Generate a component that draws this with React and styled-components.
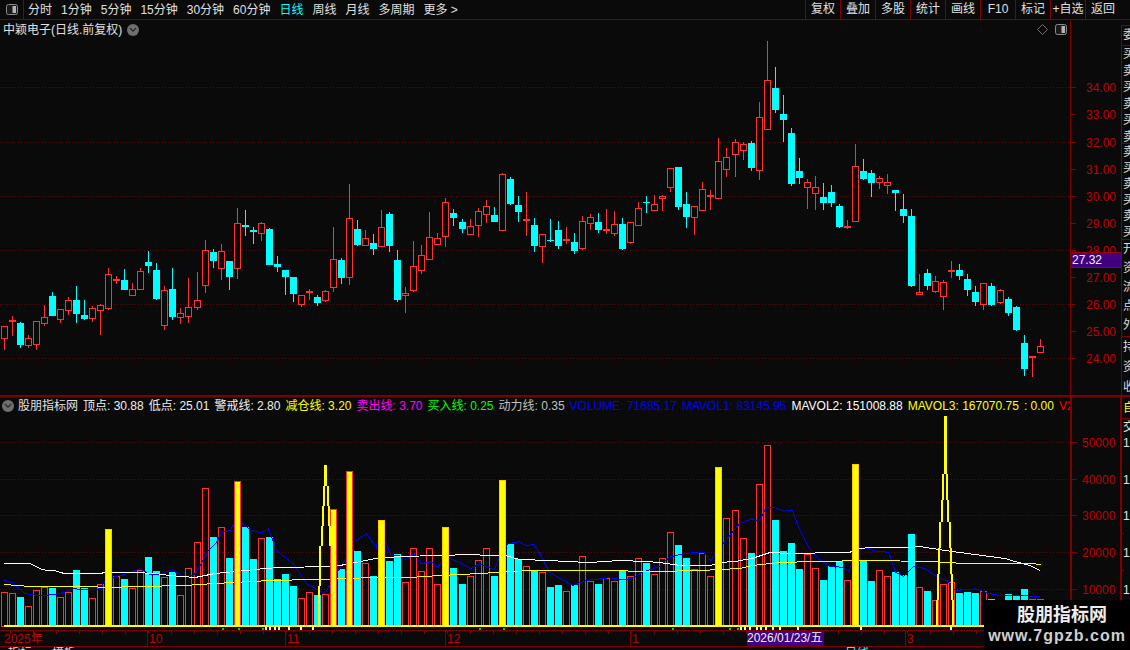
import React from 'react';
import styled, { createGlobalStyle } from 'styled-components';

const LINE = '#800000';
const GRID = '#6a0000';
const AXIS_TEXT = '#c00000';
const UP = '#ff3232';
const DOWN = '#00ffff';
const YELLOW = '#ffff00';

const GlobalStyle = createGlobalStyle`
  html, body {
    margin: 0;
    background: #0a0a0a;
  }
`;

const Page = styled.div`
  position: relative;
  width: 1130px;
  height: 650px;
  overflow: hidden;
  background: #0a0a0a;
  color: #e0e0e0;
  font: 12px/1 "Liberation Sans", "Noto Sans CJK SC", sans-serif;
`;

const Toolbar = styled.div`
  display: flex;
  align-items: center;
  height: 19px;
  border-bottom: 1px solid ${LINE};
`;

const ToggleBox = styled.div`
  display: flex;
  align-items: center;
  justify-content: center;
  box-sizing: border-box;
  width: 24px;
  height: 19px;
  border-right: 1px solid ${LINE};
`;

const Tabs = styled.div`
  display: flex;
  gap: 9px;
  margin-left: 4px;
`;

const Tab = styled.span`
  color: ${({ $active }) => ($active ? DOWN : '#e0e0e0')};
  white-space: nowrap;
`;

const Actions = styled.div`
  display: flex;
  margin-left: auto;
  margin-right: 10px;
`;

const ActionButton = styled.div`
  box-sizing: border-box;
  width: 35px;
  height: 19px;
  line-height: 19px;
  text-align: center;
  white-space: nowrap;
  border-left: 1px solid ${LINE};
`;

const PriceRow = styled.div`
  display: flex;
  height: 377px;
  box-sizing: border-box;
  border-bottom: 2px solid ${LINE};
`;

const Plot = styled.div`
  width: 1070px;
  flex: none;
`;

const PlotHeader = styled.div`
  display: flex;
  align-items: center;
  height: 18px;
  padding: 1px 3px 0 3px;
  box-sizing: border-box;
`;

const Title = styled.span`
  white-space: nowrap;
`;

const RoundIcon = styled.span`
  display: inline-flex;
  align-items: center;
  justify-content: center;
  width: 12px;
  height: 12px;
  border-radius: 50%;
  background: #6e6e6e;
  flex: none;
`;

const TitleIcon = styled(RoundIcon)`
  margin-left: 5px;
`;

const HeaderIcons = styled.div`
  display: flex;
  align-items: center;
  gap: 7px;
  margin-left: auto;
`;

const PriceAxis = styled.div`
  position: relative;
  width: 51px;
  flex: none;
  border-left: 1px solid ${LINE};
  box-sizing: border-box;
`;

const PriceTag = styled.div`
  position: absolute;
  left: 0;
  right: 0;
  top: 232px;
  height: 16px;
  box-sizing: border-box;
  padding-left: 1px;
  line-height: 14px;
  color: #f0f0f0;
  background: #400080;
  border-top: 1px solid #a00000;
  border-bottom: 1px solid #a00000;
`;

const SideStrip = styled.div`
  width: 9px;
  flex: none;
  padding-top: 5px;
  overflow: hidden;
`;

const SideCell = styled.div`
  box-sizing: border-box;
  height: ${({ $height }) => $height}px;
  width: 9px;
  padding-left: 1px;
  overflow: hidden;
  border-top: 1px solid ${LINE};
  border-left: 1px solid ${LINE};
  color: #dcdcdc;
  line-height: ${({ $leading }) => $leading}px;
`;

const VolumeRow = styled.div`
  display: flex;
  height: 233px;
`;

const Legend = styled.div`
  display: flex;
  align-items: center;
  gap: 5px;
  height: 18px;
  padding-left: 2px;
  overflow: hidden;
  white-space: nowrap;
`;

const LegendName = styled.span`
  margin-left: -1px;
`;

const LegendItem = styled.span`
  color: ${({ $color }) => $color};
  flex: none;
`;

const ChartSvg = styled.svg`
  display: block;
`;

const TimeRow = styled.div`
  position: relative;
  height: 17px;
  box-sizing: border-box;
  border-top: 1px solid ${LINE};
  border-bottom: 1px solid ${LINE};
`;

const DateTag = styled.div`
  position: absolute;
  left: 747px;
  top: 0;
  width: 77px;
  height: 15px;
  line-height: 15px;
  color: #f0f0f0;
  background: #400080;
  white-space: nowrap;
`;

const FooterRow = styled.div`
  position: relative;
  display: flex;
  height: 3px;
  overflow: hidden;
  padding-left: 8px;
  line-height: 12px;
  color: #dcdcdc;
`;

const FooterLabel = styled.span`
  margin-left: ${({ $gap }) => $gap || 0}px;
  color: ${({ $active }) => ($active ? DOWN : '#dcdcdc')};
  white-space: nowrap;
`;

const Watermark = styled.div`
  position: absolute;
  right: 0;
  bottom: 0;
  width: 146px;
  height: 50px;
  background: #000;
  display: flex;
  flex-direction: column;
  align-items: center;
`;

const WatermarkName = styled.div`
  margin-top: 5px;
  margin-left: 10px;
  font-size: 18px;
  font-weight: 700;
  line-height: 20px;
  color: #ececec;
`;

const WatermarkUrl = styled.div`
  margin-top: 2px;
  font-size: 16px;
  font-weight: 700;
  line-height: 18px;
  letter-spacing: 1px;
  color: #cfcfcf;
`;

// [up, wick top, body top, body bottom, wick bottom], in page pixels
const candles = [
  [1, 326, 326, 339, 350], [1, 316, 320, 322, 336], [0, 322, 323, 345, 348], [1, 335, 338, 346, 348],
  [1, 321, 321, 345, 350], [1, 305, 317, 324, 326], [0, 292, 296, 316, 316], [1, 309, 309, 320, 323],
  [1, 297, 300, 311, 315], [0, 286, 300, 314, 323], [0, 300, 315, 319, 320], [1, 306, 308, 319, 322],
  [1, 304, 305, 311, 335], [1, 268, 274, 309, 310], [1, 276, 279, 280, 284], [0, 269, 280, 290, 290],
  [1, 283, 289, 296, 296], [1, 268, 271, 290, 290], [0, 251, 262, 266, 273], [0, 263, 270, 299, 300],
  [1, 286, 290, 326, 330], [0, 268, 289, 317, 320], [1, 308, 313, 318, 324], [1, 278, 307, 317, 323],
  [1, 272, 300, 308, 310], [1, 240, 250, 286, 293], [0, 249, 252, 261, 268], [1, 244, 251, 269, 280],
  [0, 261, 261, 277, 290], [1, 208, 223, 269, 279], [0, 210, 225, 227, 236], [0, 227, 230, 232, 244],
  [1, 222, 223, 234, 241], [0, 228, 229, 265, 265], [0, 256, 264, 267, 272], [0, 270, 270, 277, 295],
  [0, 277, 277, 294, 302], [1, 295, 295, 305, 307], [1, 289, 291, 293, 300], [0, 295, 297, 303, 306],
  [1, 290, 291, 301, 302], [1, 227, 259, 288, 292], [0, 258, 260, 278, 284], [1, 184, 218, 278, 285],
  [0, 220, 229, 245, 246], [1, 230, 238, 246, 246], [0, 234, 243, 249, 255], [1, 210, 227, 247, 247],
  [0, 212, 214, 246, 252], [0, 250, 260, 300, 302], [1, 287, 293, 296, 313], [1, 241, 266, 291, 292],
  [1, 245, 255, 271, 274], [1, 212, 237, 260, 260], [1, 233, 238, 245, 245], [1, 198, 202, 237, 247],
  [0, 209, 213, 218, 226], [0, 219, 222, 229, 233], [1, 219, 226, 235, 235], [1, 208, 211, 226, 237],
  [1, 200, 206, 215, 223], [0, 207, 215, 222, 222], [1, 173, 174, 231, 231], [0, 177, 179, 204, 205],
  [0, 196, 205, 212, 222], [1, 192, 219, 221, 236], [0, 218, 225, 246, 252], [1, 234, 234, 247, 263],
  [0, 219, 240, 241, 242], [0, 221, 230, 246, 249], [1, 227, 239, 241, 244], [0, 233, 242, 251, 254],
  [1, 216, 221, 249, 250], [1, 214, 217, 224, 230], [0, 213, 222, 230, 233], [1, 209, 229, 231, 234],
  [1, 211, 224, 234, 236], [0, 218, 224, 249, 250], [1, 222, 222, 243, 244], [1, 202, 208, 226, 226],
  [0, 196, 202, 203, 213], [1, 195, 204, 211, 211], [1, 195, 196, 199, 211], [1, 168, 168, 188, 192],
  [0, 167, 167, 207, 210], [0, 192, 204, 217, 228], [1, 206, 206, 218, 235], [1, 182, 189, 211, 211],
  [1, 190, 195, 197, 210], [1, 138, 161, 199, 199], [1, 148, 157, 170, 177], [1, 139, 142, 155, 177],
  [1, 142, 144, 151, 160], [0, 141, 143, 168, 171], [1, 102, 117, 171, 180], [1, 41, 80, 130, 130],
  [0, 67, 88, 110, 113], [0, 95, 114, 120, 142], [0, 128, 133, 184, 186], [0, 158, 171, 178, 184],
  [1, 179, 182, 188, 209], [1, 176, 187, 194, 210], [0, 183, 197, 203, 210], [0, 185, 192, 203, 207],
  [0, 204, 206, 227, 228], [1, 220, 226, 228, 229], [1, 144, 166, 222, 222], [0, 159, 171, 179, 180],
  [0, 170, 173, 183, 197], [1, 176, 178, 183, 189], [1, 174, 182, 186, 194], [0, 190, 190, 193, 211],
  [0, 194, 209, 216, 223], [0, 209, 216, 286, 287], [1, 274, 292, 295, 295], [0, 269, 273, 286, 290],
  [1, 276, 281, 292, 293], [1, 280, 282, 297, 310], [1, 261, 270, 272, 278], [0, 264, 270, 276, 280],
  [0, 274, 279, 290, 296], [0, 286, 292, 302, 306], [1, 283, 283, 305, 310], [0, 283, 286, 305, 306],
  [1, 289, 290, 303, 304], [0, 297, 299, 313, 316], [0, 306, 307, 330, 331], [0, 335, 343, 369, 376],
  [1, 356, 356, 358, 377], [1, 339, 346, 353, 353],
];

const volumes = [
  592, 593, 597, 606, 590, 587, 588, 597, 592, 570, 588, 598, 584, 529, 576, 579,
  588, 570, 557, 571, 577, 572, 595, 568, 542, 488, 537, 527, 558, 481, 527, 559,
  538, 537, 579, 574, 586, 598, 592, 595, 594, 509, 569, 471, 551, 563, 576, 520,
  561, 554, 582, 548, 571, 548, 584, 527, 568, 584, 576, 560, 548, 576, 480, 544,
  559, 566, 570, 572, 587, 585, 591, 585, 556, 581, 584, 578, 581, 571, 576, 558,
  563, 574, 558, 532, 545, 558, 569, 553, 576, 467, 518, 510, 538, 553, 484, 445,
  520, 551, 543, 569, 554, 568, 580, 566, 561, 580, 464, 561, 581, 570, 576, 572,
  575, 534, 587, 591, 600, 584, 582, 593, 592, 593, 591, 599, 600, 594, 595, 589,
  599, 599,
];

// bar colour of the flagged days; three of them keep the red edge
const flagged = new Set([13, 29, 41, 43, 47, 55, 62, 89, 106]);
const redEdged = new Set([29, 41, 43]);

const xOf = (i) => Math.floor(4.3 + 8.03 * i);

// polyline points read off 3x crops: x/3 + crop left, y/3 + 500
const fromCrop = (left, pts) => pts.map(([x, y]) => [left + x / 3, 500 + y / 3]);

const blueLine = [
  ...fromCrop(0, [[12, 238], [40, 248], [75, 280], [120, 286], [180, 280], [220, 265], [270, 268], [300, 265], [320, 235], [380, 220], [420, 205], [450, 222], [480, 222], [515, 208], [550, 228], [580, 225], [600, 195], [625, 150], [650, 125], [665, 95], [690, 90], [705, 65], [720, 65], [755, 90], [785, 97], [805, 85], [830, 150], [880, 190], [920, 250], [975, 280], [1000, 235], [1040, 170], [1060, 125], [1100, 100], [1128, 140]]),
  ...fromCrop(376, [[0, 135], [10, 120], [30, 130], [45, 165], [70, 165], [90, 178], [115, 160], [135, 190], [165, 183], [185, 200], [210, 170], [250, 185], [285, 205], [310, 190], [355, 208], [370, 170], [395, 130], [430, 124], [450, 135], [475, 132], [500, 175], [520, 215], [590, 255], [630, 240], [700, 232], [745, 238], [770, 232], [800, 215], [850, 198], [880, 170], [910, 163], [945, 157], [985, 157], [1005, 180], [1025, 150], [1045, 125], [1090, 70], [1128, 55]]),
  ...fromCrop(752, [[20, 62], [45, 20], [70, 22], [95, 32], [120, 28], [140, 80], [170, 140], [200, 175], [235, 198], [270, 200], [290, 212], [310, 165], [335, 140], [370, 152], [410, 155], [430, 215], [455, 227], [485, 197], [520, 205], [560, 232], [585, 240], [610, 270], [670, 265], [715, 280], [745, 285], [865, 287]]),
];

const whiteLine = [
  [4, 563], [30, 563], [36, 566], [42, 569], [48, 570], [55, 570], [60, 572], [65, 573], [100, 573], [105, 572], [135, 572], [155, 573], [170, 575], [195, 577],
  [215, 573], [235, 571], [265, 568], [280, 567], [330, 566], [340, 565], [376, 558], [400, 556], [440, 555], [470, 554], [490, 555], [505, 555], [520, 559],
  [550, 560], [565, 561], [590, 562], [620, 560], [645, 561], [660, 562], [680, 565], [700, 565], [710, 565], [720, 562], [735, 561], [752, 558], [770, 552],
  [790, 553], [840, 552], [850, 552], [855, 548], [875, 547], [910, 547], [920, 546], [945, 550], [960, 552], [975, 554], [990, 556], [1005, 558], [1015, 561],
  [1030, 565], [1040, 570],
];

const yellowLine = [
  [4, 584], [30, 586], [90, 586], [105, 587], [140, 586], [185, 585], [215, 583], [270, 580], [315, 579], [376, 577], [410, 577], [440, 575], [480, 573], [530, 570],
  [600, 570], [655, 571], [700, 570], [740, 568], [752, 565], [780, 562], [815, 561], [870, 560], [930, 561], [965, 563], [1030, 563], [1041, 564],
];

// stepped spike: half width per band, from the tip down
const spikes = [
  { x: 325.5, top: 465, bands: [[486, 1], [506, 2], [526, 3], [546, 4], [586, 6], [626, 7]] },
  { x: 945.3, top: 416, bands: [[474, 1], [500, 2], [522, 3], [548, 5], [574, 6], [600, 7], [626, 8]] },
];

// half pixel offset keeps flat runs on the pixel row when drawn without antialiasing
const toPoints = (pts) => pts.map(([x, y]) => `${x.toFixed(1)},${(y + 0.5).toFixed(1)}`).join(' ');

const priceTicks = [
  [34, 87], [33, 114], [32, 142], [31, 169], [30, 196], [29, 223], [28, 250], [27, 277], [26, 304], [25, 331], [24, 358],
];
const priceGrid = [87, 142, 196, 250, 304, 358];
const volumeTicks = [[50000, 442], [40000, 479], [30000, 515], [20000, 552], [10000, 589]];

const legendItems = [
  ['顶点: 30.88', '#f0f0f0'],
  ['低点: 25.01', '#f0f0f0'],
  ['警戒线: 2.80', '#f0f0f0'],
  ['减仓线: 3.20', YELLOW],
  ['卖出线: 3.70', '#ff00ff'],
  ['买入线: 0.25', '#00ff00'],
  ['动力线: 0.35', '#c0c0c0'],
  ['VOLUME: 71685.17', '#0000ff'],
  ['MAVOL1: 83145.95', '#0000ff'],
  ['MAVOL2: 151008.88', '#ffffff'],
  ['MAVOL3: 167070.75', YELLOW],
  [': 0.00', YELLOW],
  ['V2', '#ff0000'],
];

const months = [
  ['10', 147],
  ['11', 285],
  ['12', 445],
  ['1', 630],
  ['3', 905],
];

const greenMarks = [222, 238, 262, 479, 503, 672, 729, 737];
const whiteMarks = [265, 269, 274, 278, 288, 300, 312, 740, 744, 749, 756, 760, 765, 772, 779, 797, 860, 950];

const PanelIcon = () => (
  <svg width="12" height="11" viewBox="0 0 12 11">
    <rect x="0.5" y="0.5" width="11" height="10" rx="2" fill="#1a1a1a" stroke="#8a8a8a" />
    <rect x="6.5" y="2" width="3.5" height="7" fill="#b4b4b4" />
  </svg>
);

const Chevron = () => (
  <svg width="8" height="6" viewBox="0 0 8 6">
    <path d="M1 1.2 L4 4.2 L7 1.2" fill="none" stroke="#222" strokeWidth="1.2" />
  </svg>
);

const Diamond = () => (
  <svg width="11" height="11" viewBox="0 0 11 11">
    <path d="M5.5 0.5 L10.5 5.5 L5.5 10.5 L0.5 5.5 Z" fill="none" stroke="#707070" />
  </svg>
);

function PriceChart() {
  return (
    <ChartSvg width="1070" height="357" viewBox="0 38 1070 357" shapeRendering="crispEdges">
      {priceGrid.map((y) => (
        <line key={y} x1="0" x2="1070" y1={y + 0.5} y2={y + 0.5} stroke={GRID} strokeDasharray="1 2" />
      ))}
      {candles.map(([up, wickTop, top, bottom, wickBottom], i) => {
        const x = xOf(i);
        const color = up ? UP : DOWN;
        return (
          <g key={i}>
            <rect x={x} y={wickTop} width="1" height={wickBottom - wickTop} fill={color} />
            {up ? (
              <rect x={x - 2.5} y={top + 0.5} width="6" height={Math.max(bottom - top - 1, 1)} fill="#0a0a0a" stroke={color} />
            ) : (
              <rect x={x - 3} y={top} width="7" height={Math.max(bottom - top, 1)} fill={color} />
            )}
          </g>
        );
      })}
    </ChartSvg>
  );
}

function VolumeChart() {
  return (
    <ChartSvg width="1070" height="215" viewBox="0 415 1070 215" shapeRendering="crispEdges">
      {volumeTicks.map(([label, y]) => (
        <line key={label} x1="0" x2="1070" y1={y + 0.5} y2={y + 0.5} stroke={GRID} strokeDasharray="1 2" />
      ))}
      {volumes.map((top, i) => {
        if (flagged.has(i)) return null;
        const x = xOf(i);
        return candles[i][0] ? (
          <rect key={i} x={x - 2.5} y={top + 0.5} width="6" height={626 - top} fill="none" stroke={UP} />
        ) : (
          <rect key={i} x={x - 3} y={top} width="7" height={626 - top} fill={DOWN} />
        );
      })}
      <polyline points={toPoints(blueLine)} fill="none" stroke="#0000ff" />
      <polyline points={toPoints(whiteLine)} fill="none" stroke="#ffffff" />
      <polyline points={toPoints(yellowLine)} fill="none" stroke={YELLOW} />
      {volumes.map((top, i) =>
        flagged.has(i) ? (
          <rect
            key={i}
            x={xOf(i) - 2.5}
            y={top + 0.5}
            width="6"
            height={626 - top}
            fill={YELLOW}
            stroke={redEdged.has(i) ? UP : '#ffc800'}
          />
        ) : null
      )}
      {spikes.map(({ x, top, bands }) => {
        let from = top;
        return (
          <g key={x} fill={YELLOW}>
            {bands.map(([to, half], b) => {
              const y = from;
              from = to;
              return b === 0 ? (
                <rect key={to} x={x - 1.5} y={y} width="3" height={to - y} />
              ) : (
                <g key={to}>
                  <rect x={x - half - 1} y={y} width="2" height={to - y} />
                  <rect x={x + half - 1} y={y} width="2" height={to - y} />
                </g>
              );
            })}
          </g>
        );
      })}
      <rect x="4" y="625" width="1037" height="2" fill={YELLOW} />
      {greenMarks.map((x) => (
        <rect key={x} x={x} y="628" width="2" height="2" fill="#00d000" />
      ))}
      {whiteMarks.map((x) => (
        <rect key={x} x={x} y="627" width="2" height="3" fill="#f0f0f0" />
      ))}
    </ChartSvg>
  );
}

function PriceScale() {
  return (
    <ChartSvg width="50" height="375" viewBox="1071 20 50 375" shapeRendering="crispEdges">
      {priceTicks.map(([value, y]) => (
        <g key={value}>
          <rect x="1071" y={y} width="5" height="1" fill={LINE} />
          <text x="1086" y={y + 5} fill={AXIS_TEXT} fontSize="12">
            {value}.00
          </text>
        </g>
      ))}
    </ChartSvg>
  );
}

function VolumeScale() {
  return (
    <ChartSvg width="60" height="233" viewBox="1070 397 60 233" shapeRendering="crispEdges">
      <rect x="1070" y="397" width="2" height="233" fill={LINE} />
      <rect x="1120" y="397" width="2" height="233" fill={LINE} />
      <rect x="1120" y="418" width="10" height="1" fill={LINE} />
      <text x="1123" y="412" fill={YELLOW} fontSize="12">自</text>
      <text x="1123" y="431" fill="#e0e0e0" fontSize="12">交</text>
      {volumeTicks.map(([label, y]) => (
        <g key={label}>
          <rect x="1071" y={y} width="6" height="1" fill={LINE} />
          <text x="1082" y={y + 5} fill={AXIS_TEXT} fontSize="12">{label}</text>
          <text x="1123" y={y + 5} fill="#e0e0e0" fontSize="12">1</text>
        </g>
      ))}
      {[533, 570, 607].map((y) => (
        <rect key={y} x="1120" y={y} width="4" height="1" fill={LINE} />
      ))}
    </ChartSvg>
  );
}

function TimeScale() {
  return (
    <ChartSvg width="1130" height="15" viewBox="0 631 1130 15" shapeRendering="crispEdges">
      {Array.from({ length: 48 }, (_, i) => (
        <rect key={i} x={10 + i * 23} y="631" width="1" height="3" fill={LINE} />
      ))}
      <text x="4" y="643" fill={AXIS_TEXT} fontSize="12">2025年</text>
      {months.map(([label, x]) => (
        <g key={label}>
          <rect x={x} y="631" width="1" height="15" fill={LINE} />
          <text x={x + 2} y="643" fill={AXIS_TEXT} fontSize="12">{label}</text>
        </g>
      ))}
      <rect x="1070" y="631" width="2" height="15" fill={LINE} />
    </ChartSvg>
  );
}

export default function App() {
  return (
    <Page>
      <GlobalStyle />
      <Toolbar>
        <ToggleBox>
          <PanelIcon />
        </ToggleBox>
        <Tabs>
          {['分时', '1分钟', '5分钟', '15分钟', '30分钟', '60分钟'].map((t) => (
            <Tab key={t}>{t}</Tab>
          ))}
          <Tab $active>日线</Tab>
          {['周线', '月线', '多周期', '更多 >'].map((t) => (
            <Tab key={t}>{t}</Tab>
          ))}
        </Tabs>
        <Actions>
          {['复权', '叠加', '多股', '统计', '画线', 'F10', '标记', '+自选', '返回'].map((t) => (
            <ActionButton key={t}>{t}</ActionButton>
          ))}
        </Actions>
      </Toolbar>

      <PriceRow>
        <Plot>
          <PlotHeader>
            <Title>中颖电子(日线.前复权)</Title>
            <TitleIcon>
              <Chevron />
            </TitleIcon>
            <HeaderIcons>
              <Diamond />
              <PanelIcon />
            </HeaderIcons>
          </PlotHeader>
          <PriceChart />
        </Plot>
        <PriceAxis>
          <PriceScale />
          <PriceTag>27.32</PriceTag>
        </PriceAxis>
        <SideStrip>
          <SideCell $height={20} $leading={18}>委</SideCell>
          <SideCell $height={98} $leading={16.5}>买<br />卖<br />买<br />卖<br />买<br />卖</SideCell>
          <SideCell $height={96} $leading={16}>卖<br />买<br />卖<br />买<br />卖<br />买</SideCell>
          <SideCell $height={97} $leading={19}>开<br />资<br />流<br />点<br />外</SideCell>
          <SideCell $height={60} $leading={20}>持<br />资<br />收</SideCell>
        </SideStrip>
      </PriceRow>

      <VolumeRow>
        <Plot>
          <Legend>
            <RoundIcon>
              <Chevron />
            </RoundIcon>
            <LegendName>股朋指标网</LegendName>
            {legendItems.map(([text, color]) => (
              <LegendItem key={text} $color={color}>{text}</LegendItem>
            ))}
          </Legend>
          <VolumeChart />
        </Plot>
        <VolumeScale />
      </VolumeRow>

      <TimeRow>
        <TimeScale />
        <DateTag>2026/01/23/五</DateTag>
      </TimeRow>

      <FooterRow>
        <FooterLabel>指标</FooterLabel>
        <FooterLabel $gap={20}>模板</FooterLabel>
        <FooterLabel $gap={769} $active>日线</FooterLabel>
      </FooterRow>

      <Watermark>
        <WatermarkName>股朋指标网</WatermarkName>
        <WatermarkUrl>www.7gpzb.com</WatermarkUrl>
      </Watermark>
    </Page>
  );
}
